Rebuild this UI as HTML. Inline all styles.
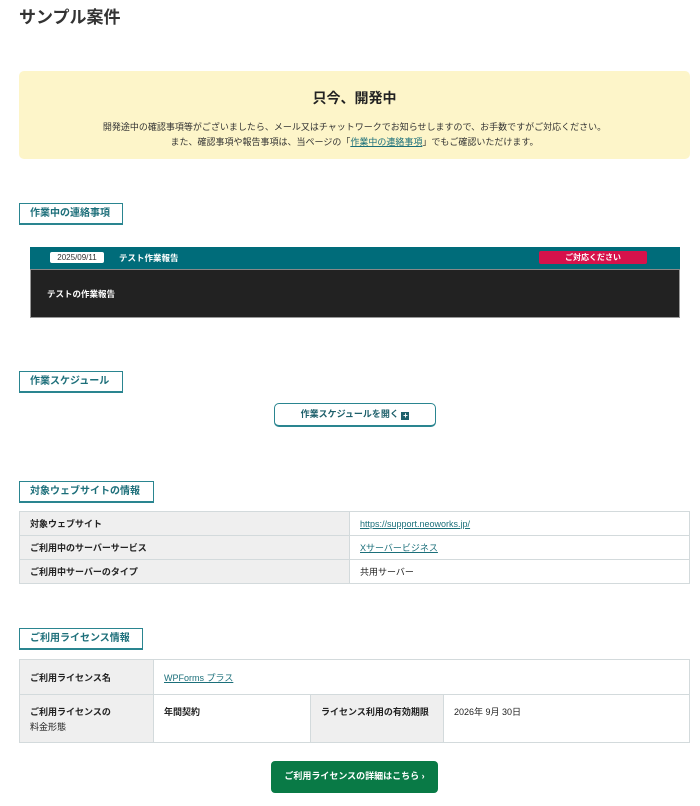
<!DOCTYPE html>
<html><head><meta charset="utf-8"><style>
*{margin:0;padding:0;box-sizing:border-box}
body{width:700px;height:806px;background:#fff;font-family:"Liberation Sans","Noto Sans CJK JP",sans-serif;color:#222;position:relative;overflow:hidden}
.a{position:absolute}
.lbl{position:absolute;left:19px;height:22px;border:1px solid #2a8590;border-bottom-width:2px;color:#1d6f7a;font-size:10px;font-weight:bold;line-height:20px;padding-left:10px}
table{position:absolute;left:19px;width:671px;border-collapse:collapse;font-size:9px}
td{border:1px solid #d3dadc;padding:0 10px;vertical-align:middle}
td.g{background:#efefef;font-weight:bold}
a{color:#1b6f7a;text-decoration:underline}
</style></head><body>
<div class="a" style="left:19px;top:3px;font-size:17px;font-weight:bold;color:#333">サンプル案件</div>
<div class="a" style="left:19px;top:71px;width:671px;height:88px;background:#fdf5c9;border-radius:5px;text-align:center">
<div style="margin-top:17px;font-size:14px;font-weight:bold">只今、開発中</div>
<div style="margin-top:12px;font-size:9px;line-height:15px;color:#333">開発途中の確認事項等がございましたら、メール又はチャットワークでお知らせしますので、お手数ですがご対応ください。<br>また、確認事項や報告事項は、当ページの「<a>作業中の連絡事項</a>」でもご確認いただけます。</div>
</div>
<div class="lbl" style="top:203px;width:104px">作業中の連絡事項</div>
<div class="a" style="left:30px;top:247px;width:650px;height:23px;background:#006c7a;border-bottom:1px solid #888"></div>
<div class="a" style="left:50px;top:252px;width:54px;height:11px;background:#fff;border-radius:2px;font-size:8px;line-height:11px;text-align:center;color:#333">2025/09/11</div>
<div class="a" style="left:119px;top:252px;font-size:8.5px;font-weight:bold;color:#fff">テスト作業報告</div>
<div class="a" style="left:539px;top:251px;width:108px;height:13px;background:#d6124b;border-radius:2px;font-size:8px;font-weight:bold;line-height:13px;text-align:center;color:#fff">ご対応ください</div>
<div class="a" style="left:30px;top:270px;width:650px;height:48px;background:#222;border:1px solid #999;border-top:none"></div>
<div class="a" style="left:47px;top:288px;font-size:8.5px;font-weight:bold;color:#fff">テストの作業報告</div>
<div class="lbl" style="top:371px;width:104px">作業スケジュール</div>
<div class="a" style="left:274px;top:403px;width:162px;height:24px;border:1px solid #2a8590;border-bottom-width:2px;border-radius:5px;font-size:9px;font-weight:bold;line-height:21px;text-align:center;color:#1d5f6a">作業スケジュールを開く <span style="display:inline-block;width:8px;height:8px;background:#1d5f6a;color:#fff;font-size:8px;line-height:8px;vertical-align:-1px">+</span></div>
<div class="lbl" style="top:481px;width:135px">対象ウェブサイトの情報</div>
<table style="top:511px">
<tr style="height:24px"><td class="g" style="width:330px">対象ウェブサイト</td><td><a>https://support.neoworks.jp/</a></td></tr>
<tr style="height:24px"><td class="g">ご利用中のサーバーサービス</td><td><a>Xサーバービジネス</a></td></tr>
<tr style="height:24px"><td class="g">ご利用中サーバーのタイプ</td><td>共用サーバー</td></tr>
</table>
<div class="lbl" style="top:628px;width:124px">ご利用ライセンス情報</div>
<table style="top:659px">
<tr style="height:35px"><td class="g" style="width:134px">ご利用ライセンス名</td><td colspan="3"><a>WPForms プラス</a></td></tr>
<tr style="height:48px"><td class="g" style="vertical-align:top;padding-top:10px;line-height:15px">ご利用ライセンスの<br><span style="font-weight:normal">料金形態</span></td><td style="width:157px;vertical-align:top;padding-top:10px;font-weight:bold">年間契約</td><td class="g" style="width:133px;vertical-align:top;padding-top:10px">ライセンス利用の有効期限</td><td style="vertical-align:top;padding-top:10px">2026年 9月 30日</td></tr>
</table>
<div class="a" style="left:271px;top:761px;width:167px;height:32px;background:#097a46;border-radius:4px;color:#fff;font-size:9px;font-weight:bold;line-height:31px;text-align:center">ご利用ライセンスの詳細はこちら ›</div>
</body></html>
